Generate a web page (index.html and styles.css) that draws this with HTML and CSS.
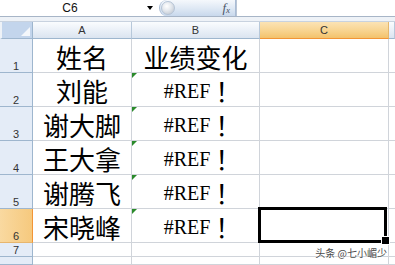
FILE: index.html
```html
<!DOCTYPE html>
<html lang="zh-CN">
<head>
  <meta charset="UTF-8">
  <title>Sheet1</title>
  <link rel="stylesheet" href="styles.css">
</head>
<body>
  <div class="formula-bar">
    <div class="name-box">
      <span class="name">C6</span>
      <span class="arrow"></span>
    </div>
    <div class="fx-box">
      <span class="knob"></span>
      <span class="fx">f<sub>x</sub></span>
    </div>
    <div class="formula-input"></div>
  </div>
  <div class="strip"></div>

  <div class="sheet">
    <div class="corner"><span class="corner-tri"></span></div>
    <div class="col-head">A</div>
    <div class="col-head">B</div>
    <div class="col-head sel">C</div>
    <div class="col-head last"></div>

    <div class="row-head">1</div>
    <div class="cell big">姓名</div>
    <div class="cell big">业绩变化</div>
    <div class="cell"></div>
    <div class="cell last"></div>

    <div class="row-head">2</div>
    <div class="cell big">刘能</div>
    <div class="cell big err"><span class="lat">#REF</span>！</div>
    <div class="cell"></div>
    <div class="cell last"></div>

    <div class="row-head">3</div>
    <div class="cell big">谢大脚</div>
    <div class="cell big err"><span class="lat">#REF</span>！</div>
    <div class="cell"></div>
    <div class="cell last"></div>

    <div class="row-head">4</div>
    <div class="cell big">王大拿</div>
    <div class="cell big err"><span class="lat">#REF</span>！</div>
    <div class="cell"></div>
    <div class="cell last"></div>

    <div class="row-head">5</div>
    <div class="cell big">谢腾飞</div>
    <div class="cell big err"><span class="lat">#REF</span>！</div>
    <div class="cell"></div>
    <div class="cell last"></div>

    <div class="row-head sel">6</div>
    <div class="cell big">宋晓峰</div>
    <div class="cell big err"><span class="lat">#REF</span>！</div>
    <div class="cell active"></div>
    <div class="cell last"></div>

    <div class="row-head">7</div>
    <div class="cell"></div>
    <div class="cell"></div>
    <div class="cell"></div>
    <div class="cell last"></div>

    <div class="row-head"></div>
    <div class="cell"></div>
    <div class="cell"></div>
    <div class="cell"></div>
    <div class="cell last"></div>
  </div>

  <div class="watermark">头条 @七小嵋少</div>
</body>
</html>
```

FILE: styles.css
```css
* {
  box-sizing: border-box;
}
body {
  margin: 0;
  width: 395px;
  height: 265px;
  overflow: hidden;
  background: #fff;
  font-family: 'Liberation Sans', sans-serif;
  position: relative;
}

/* formula bar */
.formula-bar {
  display: flex;
  height: 17px;
  border-bottom: 1px solid #a7b5c7;
  background: #fff;
}
.name-box {
  width: 155px;
  display: flex;
  align-items: center;
  background: #fff;
}
.name {
  width: 140px;
  text-align: center;
  font-size: 12px;
  color: #111;
}
.arrow {
  margin-left: 7px;
  width: 0;
  height: 0;
  border-left: 3px solid transparent;
  border-right: 3px solid transparent;
  border-top: 4px solid #000;
}
.fx-box {
  width: 77px;
  margin-left: 4px;
  display: flex;
  align-items: center;
  border: 1px solid #a9bcd5;
  border-top: none;
  border-bottom: none;
  border-radius: 8px 0 0 8px;
  background: linear-gradient(#f5f8fc, #dbe6f3 60%, #c8d8ec);
}
.knob {
  width: 14px;
  height: 14px;
  margin-left: 1px;
  border-radius: 50%;
  border: 1px solid #b5c4d6;
  background: radial-gradient(circle at 40% 35%, #fff 0, #e6eaef 40%, #b7bfca 100%);
}
.fx {
  margin-left: auto;
  margin-right: 5px;
  font-family: 'Liberation Serif', serif;
  font-style: italic;
  font-size: 13px;
  color: #4a5566;
  line-height: 1;
}
.fx sub {
  font-size: 9px;
  vertical-align: -1px;
}
.formula-input {
  flex: 1;
  background: #fff;
  border-left: 1px solid #b9c5d5;
}
.strip {
  height: 5px;
  background: #eef2f7;
  border-bottom: 1px solid #c8d2df;
}

/* grid */
.sheet {
  display: grid;
  grid-template-columns: 33px 99px 128px 129px 1fr;
  grid-template-rows: 17px repeat(6, 34px) 14px 1fr;
  height: 243px;
}
.corner {
  position: relative;
  border-left: 2px solid #eef2f7;
  border-right: 1px solid #9eb6ce;
  border-bottom: 1px solid #9eb6ce;
  background: #c3d5ec;
}
.corner-tri {
  position: absolute;
  right: 2px;
  bottom: 2px;
  width: 0;
  height: 0;
  border-left: 9px solid transparent;
  border-bottom: 9px solid #f4f7fb;
}
.col-head {
  display: flex;
  align-items: center;
  justify-content: center;
  font-size: 11px;
  color: #333;
  background: linear-gradient(#fafcfe, #e9eff7 55%, #dbe4f0);
  border-right: 1px solid #b7c8da;
  border-bottom: 1px solid #9eb6ce;
}
.col-head.sel {
  background: linear-gradient(#fbe3b5, #f8d593 50%, #f3c26c);
  border-bottom-color: #f29536;
  border-right-color: #e5b76c;
}
.row-head {
  display: flex;
  align-items: flex-end;
  justify-content: center;
  font-size: 11px;
  line-height: 11px;
  color: #333;
  background: #e4ecf7;
  border-right: 1px solid #9eb6ce;
  border-bottom: 1px solid #9eb6ce;
}
.row-head.sel {
  background: linear-gradient(90deg, #f9d9a0, #f6c97e);
  border-right-color: #f29536;
  border-bottom-color: #e7b66e;
}
.cell {
  position: relative;
  display: flex;
  align-items: flex-end;
  justify-content: center;
  border-right: 1px solid #d0d4da;
  border-bottom: 1px solid #d0d4da;
}
.cell.last {
  border-right: none;
}
.big {
  padding-bottom: 2px;
  font-family: 'Noto Sans CJK SC', sans-serif;
  font-size: 26px;
  line-height: 26px;
  color: #000;
}
.lat {
  font-family: 'Liberation Serif', serif;
  font-size: 20px;
  margin-right: 5px;
  vertical-align: 7px;
}
.err {
  padding-left: 14px;
}
.err::before {
  content: '';
  position: absolute;
  top: 0;
  left: 0;
  width: 0;
  height: 0;
  border-top: 5px solid #2b8a2b;
  border-right: 5px solid transparent;
}
.active::after {
  content: '';
  position: absolute;
  top: -2px;
  left: -2px;
  right: 1px;
  bottom: -1px;
  border: 3px solid #000;
}
.active::before {
  content: '';
  position: absolute;
  right: -2px;
  bottom: -3px;
  width: 7px;
  height: 7px;
  background: #000;
  border: 1px solid #fff;
  z-index: 2;
}

.watermark {
  position: absolute;
  right: 8px;
  bottom: 6px;
  font-family: 'Noto Sans CJK SC', sans-serif;
  font-size: 10px;
  line-height: 12px;
  color: #4a4a4a;
  text-shadow: 0 0 2px #fff;
}
```
